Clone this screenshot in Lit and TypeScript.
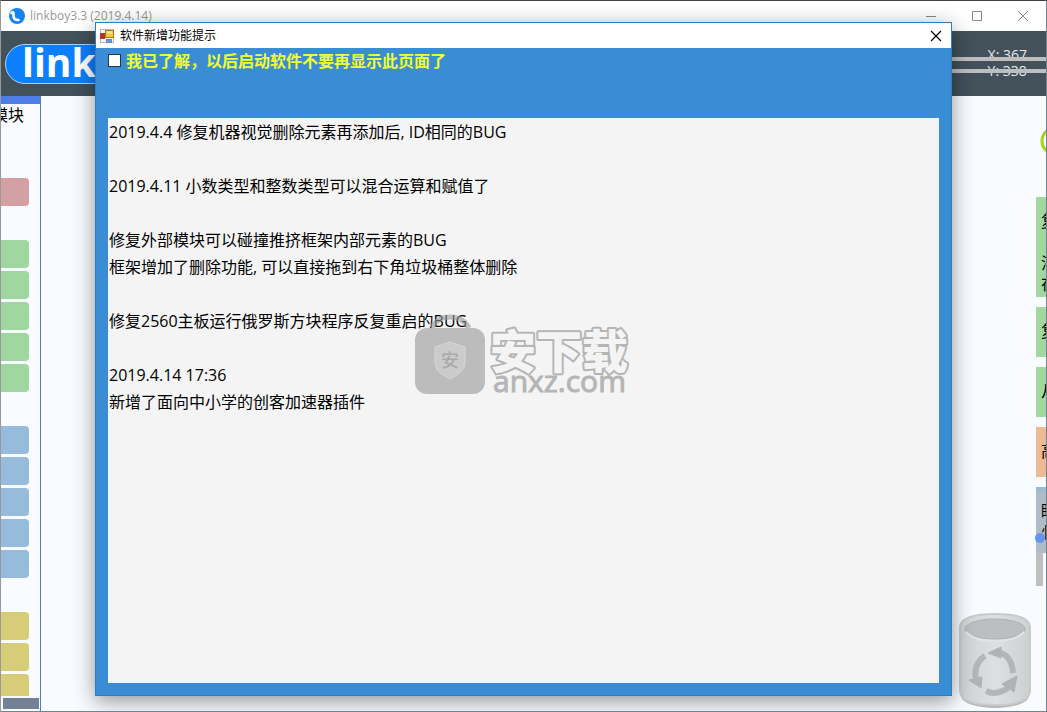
import { LitElement, html, css } from "lit";
import { customElement } from "lit/decorators.js";

const GROUPS = [
  { tone: "rose", count: 1 },
  { tone: "green", count: 5 },
  { tone: "blue", count: 5 },
  { tone: "olive", count: 3 },
];

const NOTES = [
  "2019.4.4 修复机器视觉删除元素再添加后, ID相同的BUG",
  "",
  "2019.4.11 小数类型和整数类型可以混合运算和赋值了",
  "",
  "修复外部模块可以碰撞推挤框架内部元素的BUG",
  "框架增加了删除功能, 可以直接拖到右下角垃圾桶整体删除",
  "",
  "修复2560主板运行俄罗斯方块程序反复重启的BUG",
  "",
  "2019.4.14 17:36",
  "新增了面向中小学的创客加速器插件",
];

@customElement("module-sidebar")
class ModuleSidebar extends LitElement {
  static styles = css`
    :host {
      display: flex;
      flex-direction: column;
      width: 39px;
      border-right: 1px solid #4f80a8;
      overflow: hidden;
    }
    .strip { height: 8px; flex: none; background: #4d7de6; }
    .heading {
      display: flex;
      justify-content: flex-end;
      flex: none;
      height: 74px;
      padding-right: 16px;
      font-size: 16px;
      line-height: 23px;
      white-space: nowrap;
      color: #000;
    }
    .groups {
      display: flex;
      flex-direction: column;
      gap: 34px;
      flex: 1;
      min-height: 0;
      overflow: hidden;
      padding-right: 11px;
    }
    .group { display: flex; flex-direction: column; gap: 3px; }
    .item {
      height: 28px;
      padding: 0;
      border: 0;
      border-radius: 0 4px 4px 0;
    }
    .rose { background: #d3a0a3; }
    .green { background: #a0d6a0; }
    .blue { background: #97bcdb; }
    .olive { background: #d7cd79; }
    .thumb { flex: none; height: 11px; margin: 2px 1px 2px 2px; background: #738296; }
  `;
  render() {
    return html`
      <div class="strip"></div>
      <div class="heading">模块</div>
      <div class="groups">
        ${GROUPS.map(
          (g) => html`<div class="group">
            ${Array.from({ length: g.count }, () => html`<button class="item ${g.tone}"></button>`)}
          </div>`
        )}
      </div>
      <div class="thumb"></div>
    `;
  }
}

@customElement("notice-dialog")
class NoticeDialog extends LitElement {
  static styles = css`
    :host {
      display: flex;
      flex-direction: column;
      box-sizing: border-box;
      border: 1px solid #2a7fc0;
      background: #3a8dd5;
      box-shadow: 0 5px 20px rgba(0, 0, 0, 0.42);
    }
    .bar {
      display: flex;
      align-items: center;
      gap: 6px;
      height: 25px;
      flex: none;
      padding: 0 9px 0 4px;
      background: #fff;
    }
    .bar svg { display: block; }
    .name { flex: 1; font-size: 12px; line-height: 16px; color: #000; font-weight: 400; margin: 0; }
    .close { padding: 0; border: 0; background: none; }
    .agree {
      display: flex;
      align-items: center;
      gap: 5px;
      flex: none;
      height: 24px;
      margin: 0 12px 46px;
      font-size: 16px;
      font-weight: 700;
      color: #f0ff2e;
    }
    .agree input {
      appearance: none;
      box-sizing: border-box;
      width: 13px;
      height: 13px;
      margin: 0;
      border: 1px solid #333;
      background: #fff;
    }
    .notes {
      flex: 1;
      min-height: 0;
      margin: 0 12px 12px;
      padding: 1px;
      background: #f4f4f4;
      font-size: 16px;
      line-height: 27px;
      color: #000;
      overflow: hidden;
    }
    .notes p { margin: 0; min-height: 27px; }
  `;
  render() {
    return html`
      <div class="bar">
        <svg width="14" height="14" viewBox="0 0 14 14">
          <rect x="0.5" y="0.5" width="13" height="13" fill="#f4f4f4" stroke="#bbb" />
          <rect x="0.5" y="4.5" width="4" height="5" fill="#c52a2a" stroke="#a04040" />
          <rect x="5.5" y="1.5" width="8" height="7" fill="#f7c83c" stroke="#a87b16" />
          <path d="M7 2.5h5v2h-5z" fill="#fdeaa0" />
          <rect x="6.5" y="10.5" width="5" height="3" fill="#639be8" stroke="#5c89d8" />
        </svg>
        <h2 class="name">软件新增功能提示</h2>
        <button class="close" aria-label="关闭">
          <svg width="12" height="12" viewBox="0 0 12 12">
            <path d="M1 1 11 11M11 1 1 11" stroke="#000" stroke-width="1.2" />
          </svg>
        </button>
      </div>
      <div class="agree">
        <input type="checkbox" id="agree" />
        <label for="agree">我已了解，以后启动软件不要再显示此页面了</label>
      </div>
      <div class="notes">${NOTES.map((line) => html`<p>${line}</p>`)}</div>
    `;
  }
}

@customElement("app-root")
class AppRoot extends LitElement {
  static styles = css`
    :host {
      display: flex;
      flex-direction: column;
      position: relative;
      box-sizing: border-box;
      height: 100vh;
      overflow: hidden;
      border: 1px solid #72838c;
      border-top-color: #45403f;
      border-left-color: #999;
      background: #f8fbff;
      font-family: "Open Sans", "Noto Sans CJK SC", sans-serif;
    }
    .titlebar {
      display: flex;
      align-items: center;
      flex: none;
      height: 30px;
      padding: 0 17px 0 8px;
      gap: 5px;
      background: #fff;
    }
    .title { flex: 1; margin: 0; font-size: 12px; line-height: 16px; font-weight: 400; color: #999; }
    .controls { display: flex; gap: 34px; }
    .controls button { padding: 0; border: 0; background: none; }
    .controls svg, .titlebar svg { display: block; }
    .toolbar {
      display: flex;
      justify-content: space-between;
      align-items: center;
      position: relative;
      flex: none;
      height: 65px;
      padding: 0 19px 0 4px;
      background: #42515a;
    }
    .logo {
      box-sizing: border-box;
      height: 40px;
      padding: 0 18px 0 16px;
      border: 1px solid #a9d2ff;
      border-radius: 20px;
      background: #0a80ff;
      color: #fff;
      font-size: 39px;
      font-weight: 700;
      line-height: 34px;
    }
    .coords { padding-bottom: 2px; font-size: 14px; line-height: 16px; color: #e4e8ea; }
    .rails {
      position: absolute;
      right: 0;
      top: 26px;
      box-sizing: border-box;
      width: 110px;
      height: 16px;
      border: solid #bebec0;
      border-width: 4px 0;
    }
    .body { display: flex; flex: 1; min-height: 0; }
    .canvas { flex: 1; display: flex; justify-content: flex-end; align-items: flex-end; min-width: 0; }
    .bin { display: block; margin: 0 14px 2px 0; }
    .shelf { position: absolute; right: 0; top: 125px; width: 10px; overflow: hidden; }
    .ring { display: block; margin-bottom: 41px; }
    .card {
      height: 50px;
      box-sizing: border-box;
      margin-bottom: 10px;
      padding: 14px 0 0 5px;
      font-size: 16px;
      line-height: 21px;
      white-space: nowrap;
      background: #a0d8a0;
      color: #000;
    }
    .tall { height: 100px; }
    .peach { background: #efba91; }
    .sky { height: 66px; margin: 0; background: linear-gradient(#97bcdb 4px, #aebcc8 4px); }
    .track { width: 7px; height: 33px; background: #bfbfbf; }
    .knob {
      position: absolute;
      right: 1px;
      top: 532px;
      width: 10px;
      height: 10px;
      border-radius: 50%;
      background: #6495ee;
    }
    .dialog { position: absolute; inset: 21px 94px 15px 94px; }
    .mark { position: absolute; left: 414px; top: 312px; display: block; }
  `;
  render() {
    return html`
      <header class="titlebar">
        <svg width="16" height="16" viewBox="0 0 16 16">
          <circle cx="8" cy="8" r="8" fill="#1684ee" />
          <path d="M2.5 5Q4.5 3 4.5 6V8.500Q5 12 9.500 12" fill="none" stroke="#fff" stroke-width="2.6" stroke-linecap="round" />
        </svg>
        <h1 class="title">linkboy3.3 (2019.4.14)</h1>
        <div class="controls">
          <button aria-label="最小化">
            <svg width="12" height="12"><path d="M1 6.5h10" stroke="#888" /></svg>
          </button>
          <button aria-label="最大化">
            <svg width="12" height="12"><path d="M1.5 1.5h9v9h-9z" fill="none" stroke="#888" /></svg>
          </button>
          <button aria-label="关闭">
            <svg width="12" height="12"><path d="M1 1 11 11M11 1 1 11" stroke="#888" /></svg>
          </button>
        </div>
      </header>
      <div class="toolbar">
        <div class="logo">linkboy</div>
        <div class="coords">
          <div>X: 367</div>
          <div>Y: 338</div>
        </div>
        <div class="rails"></div>
      </div>
      <div class="body">
        <module-sidebar></module-sidebar>
        <main class="canvas">
          <svg class="bin" width="74" height="96" viewBox="0 0 74 96">
            <defs>
              <linearGradient id="can" x1="0" x2="1" y1="0" y2="0">
                <stop offset="0" stop-color="#cfd1d2" />
                <stop offset="0.5" stop-color="#dddfe0" />
                <stop offset="1" stop-color="#cdcfd1" />
              </linearGradient>
            </defs>
            <ellipse cx="37" cy="83" rx="34" ry="12" fill="#b4b8bb" />
            <path d="M2 14Q3 1 37 1T72 14V77Q72 92 37 92T2 77Z" fill="url(#can)" stroke="#c8cacc" stroke-width="2" />
            <ellipse cx="37" cy="16" rx="30" ry="10" fill="#bcbebf" stroke="#aeb0b2" />
            <path d="M8 19Q16 28 37 28T66 19" fill="none" stroke="#e2e3e4" stroke-width="2" />
            <g fill="none" stroke="#b3b5b7" stroke-width="6">
              <path d="M41 39Q54 43 55 60" />
              <path d="M27 43Q15 50 18 68" />
              <path d="M28 78Q38 83 50 75" />
            </g>
            <path d="M30 40 43 34 43 45ZM11 67 24 64 23 75ZM44 71 59 63 56 79Z" fill="#b0b2b4" stroke="#b0b2b4" stroke-linejoin="round" />
          </svg>
        </main>
      </div>
      <aside class="shelf">
        <svg class="ring" width="10" height="30"><circle cx="19" cy="15" r="13" fill="none" stroke="#a6d31c" stroke-width="3" /></svg>
        <div class="card tall">复<br />&nbsp;<br />浴<br />在</div>
        <div class="card">复</div>
        <div class="card">从</div>
        <div class="card peach">高</div>
        <div class="card sky">眼<br />忄</div>
        <div class="track"></div>
      </aside>
      <div class="knob"></div>
      <notice-dialog class="dialog" role="dialog"></notice-dialog>
      <svg class="mark" width="216" height="86" viewBox="0 0 216 86">
        <path d="M17 15Q22 4 35 4T54 15" fill="none" stroke="#9a9a9a" stroke-opacity="0.6" stroke-width="5" />
        <rect x="0" y="15" width="70" height="66" rx="12" fill="#bcbcbc" />
        <path d="M20 34 35 29 50 34V50Q50 59 35 66 20 59 20 50Z" fill="#cbcbcb" stroke="#d6d6d6" />
        <text x="26" y="54" font-size="18" font-weight="500" fill="#aaa">安</text>
        <text x="75" y="55" font-size="46" font-weight="900" fill="#f4f4f4" stroke="#b5b5b5" stroke-width="4" stroke-linejoin="round" paint-order="stroke">安下载</text>
        <text x="78" y="79" font-size="30" fill="#b5b5b5" stroke="#b5b5b5" stroke-width="1">anxz.com</text>
      </svg>
    `;
  }
}
